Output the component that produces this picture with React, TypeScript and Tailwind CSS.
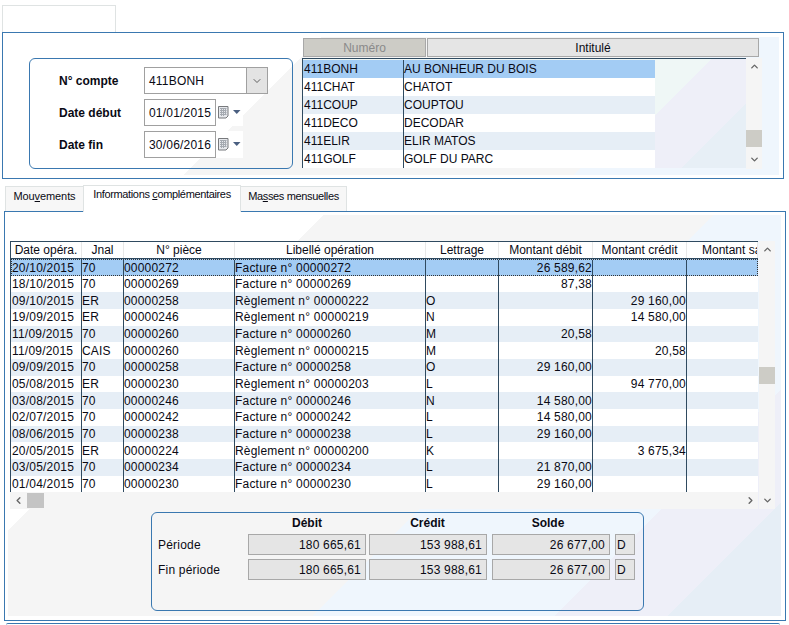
import { ChevronDown, ChevronLeft, ChevronRight, ChevronUp } from 'lucide-react';

const panelBg =
  'bg-[linear-gradient(135deg,#ffffff_223px,#f5f5f5_223px,#f5f5f5_499px,#eff6fd_499px,#eff6fd_670px,#eeeff8_670px,#eeeff8_750px,#e6eef6_750px)]';

const accounts = [
  ['411BONH', 'AU BONHEUR DU BOIS'],
  ['411CHAT', 'CHATOT'],
  ['411COUP', 'COUPTOU'],
  ['411DECO', 'DECODAR'],
  ['411ELIR', 'ELIR MATOS'],
  ['411GOLF', 'GOLF DU PARC'],
];

const columns = [
  { label: 'Date opéra.', width: 'w-[71px]' },
  { label: 'Jnal', width: 'w-[42px]' },
  { label: 'N° pièce', width: 'w-[111px]' },
  { label: 'Libellé opération', width: 'w-[191px]' },
  { label: 'Lettrage', width: 'w-[73px]' },
  { label: 'Montant débit', width: 'w-[94px]' },
  { label: 'Montant crédit', width: 'w-[94px]' },
  { label: 'Montant sa', width: 'w-[71px] !justify-start pl-[15px]' },
];

const rows = [
  ['20/10/2015', '70', '00000272', 'Facture n° 00000272', '', '26 589,62', ''],
  ['18/10/2015', '70', '00000269', 'Facture n° 00000269', '', '87,38', ''],
  ['09/10/2015', 'ER', '00000258', 'Règlement n° 00000222', 'O', '', '29 160,00'],
  ['19/09/2015', 'ER', '00000246', 'Règlement n° 00000219', 'N', '', '14 580,00'],
  ['11/09/2015', '70', '00000260', 'Facture n° 00000260', 'M', '20,58', ''],
  ['11/09/2015', 'CAIS', '00000260', 'Règlement n° 00000215', 'M', '', '20,58'],
  ['09/09/2015', '70', '00000258', 'Facture n° 00000258', 'O', '29 160,00', ''],
  ['05/08/2015', 'ER', '00000230', 'Règlement n° 00000203', 'L', '', '94 770,00'],
  ['03/08/2015', '70', '00000246', 'Facture n° 00000246', 'N', '14 580,00', ''],
  ['02/07/2015', '70', '00000242', 'Facture n° 00000242', 'L', '14 580,00', ''],
  ['08/06/2015', '70', '00000238', 'Facture n° 00000238', 'L', '29 160,00', ''],
  ['20/05/2015', 'ER', '00000224', 'Règlement n° 00000200', 'K', '', '3 675,34'],
  ['03/05/2015', '70', '00000234', 'Facture n° 00000234', 'L', '21 870,00', ''],
  ['01/04/2015', '70', '00000230', 'Facture n° 00000230', 'L', '29 160,00', ''],
];

const totals = [
  ['Période', '180 665,61', '153 988,61', '26 677,00', 'D'],
  ['Fin période', '180 665,61', '153 988,61', '26 677,00', 'D'],
];

function CalendarIcon() {
  return (
    <svg width="24" height="13" viewBox="0 0 24 13" aria-hidden="true">
      <path d="M1.500 .5h9.500v9.500l-2 2h-7.500z" fill="#e6e8ec" stroke="#77797c" />
      <path d="M3 2.500h6.500M3 4.500h6.500M3 6.500h6.500M3 8.500h6.500M4.500 2v8M6.500 2v8M8.500 2v7" stroke="#a4a9b0" />
      <path d="M16 4h7.500l-3.750 4z" fill="#4a5f80" />
    </svg>
  );
}

function DateField({ label, value }: { label: string; value: string }) {
  return (
    <div className="flex h-[27px] items-center">
      <span className="w-[85px] text-[12px] font-bold">{label}</span>
      <div className="flex h-[27px] w-[72px] items-center border border-[#a0a0a0] bg-white pl-[4px] tracking-[0.2px]">
        {value}
      </div>
      <div className="flex h-[27px] w-[27px] items-center bg-white pl-[1px]">
        <CalendarIcon />
      </div>
    </div>
  );
}

function ReadOnlyBox({ value, className }: { value: string; className: string }) {
  return (
    <div className={`flex h-[21px] items-center border border-[#a8a8a8] bg-[#e5e5e5] tracking-[0.2px] ${className}`}>
      {value}
    </div>
  );
}

function AccountPanel() {
  return (
    <div className="ml-[2px] h-[147px] w-[782px] border border-[#3a78b0] bg-white px-[3px] pt-[4px]">
      <div className={`flex h-[138px] w-[773px] pt-[1px] ${panelBg}`}>
        <div className="mt-[20px] ml-[23px] flex h-[111px] w-[264px] flex-col gap-[5px] rounded-[6px] border border-[#3a78b0] pt-[8px] pl-[29px]">
          <div className="flex h-[27px] items-center">
            <span className="w-[85px] text-[12px] font-bold">N° compte</span>
            <div className="flex h-[27px] w-[124px] items-center border border-[#a0a0a0] bg-white pl-[4px]">
              <span className="flex-1 tracking-[0.2px]">411BONH</span>
              <div className="flex h-full w-[21px] items-center justify-center border-l border-[#a0a0a0] bg-[#e3e3e3]">
                <ChevronDown size={12} strokeWidth={1.5} color="#333333" />
              </div>
            </div>
          </div>
          <DateField label="Date début" value="01/01/2015" />
          <DateField label="Date fin" value="30/06/2016" />
        </div>
        <div className="ml-[9px] w-[460px]">
          <div className="ml-[1px] flex h-[19px] gap-[1px]">
            <div className="flex w-[123px] items-center justify-center border border-[#a8a8a8] bg-[#cdccc6] text-[#8a8a8a]">
              Numéro
            </div>
            <div className="flex w-[332px] items-center justify-center border border-[#a8a8a8] bg-[#e5e5e5]">
              Intitulé
            </div>
          </div>
          <div className="mt-[1px] flex h-[111px]">
            <div className="h-[110px] w-[444px] border-t border-l border-[#2f4a60] bg-[linear-gradient(135deg,#eff7f6_289px,#eeeff8_289px,#eeeff8_345px,#e7eff6_345px)] pt-[1px]">
              {accounts.map(([code, name], i) => (
                <div
                  key={code}
                  className={`flex h-[18px] w-[352px] items-center ${
                    i === 0 ? 'bg-[#a3ccf4]' : i % 2 === 0 ? 'bg-[#e6eef6]' : 'bg-white'
                  }`}
                >
                  <span className="w-[100px] pl-[1px]">{code}</span>
                  <span className="flex h-full flex-1 items-center border-l border-[#2f4a60]">{name}</span>
                </div>
              ))}
            </div>
            <div className="flex h-[111px] w-[16px] flex-col items-center bg-[#f5f5f5] pt-[3px] pb-[4px]">
              <ChevronUp size={11} strokeWidth={3} color="#666666" />
              <div className="mt-[58px] h-[17px] w-full bg-[#cdccc6]" />
              <div className="flex-1" />
              <ChevronDown size={11} strokeWidth={3} color="#666666" />
            </div>
          </div>
        </div>
      </div>
    </div>
  );
}

function Tabs() {
  return (
    <div className="mt-[6px] flex h-[26px] items-end pl-[5px] text-[11px]">
      <div className="flex h-[25px] w-[78px] items-center justify-center border-t border-l border-[#dfe3e3] bg-[#f7f7f7] pb-[6px] tracking-[-0.1px]">
        <span className="whitespace-nowrap">
          Mou<u>v</u>ements
        </span>
      </div>
      <div className="z-10 -mb-[1px] flex h-[27px] w-[158px] items-start justify-center border-x border-t border-[#dfe3e3] bg-white pt-[3px] tracking-[-0.35px]">
        <span className="whitespace-nowrap">
          Informations <u>c</u>omplémentaires
        </span>
      </div>
      <div className="flex h-[25px] w-[106px] items-center justify-center border-t border-r border-[#dfe3e3] bg-[#f7f7f7] pb-[6px] tracking-[-0.35px]">
        <span className="whitespace-nowrap">
          Ma<u>s</u>ses mensuelles
        </span>
      </div>
    </div>
  );
}

function OperationsGrid() {
  return (
    <div className="flex h-[268px]">
      <div className="w-[748px]">
        <div className="h-[251px] w-[748px] overflow-hidden border-t border-l border-[#2f4a60] bg-white">
          <div className="flex h-[17px] border-b border-[#2f4a60]">
            {columns.map((col) => (
              <div
                key={col.label}
                className={`flex shrink-0 items-center justify-center overflow-hidden border-r border-[#e8e8e8] pb-[1px] whitespace-nowrap ${col.width}`}
              >
                {col.label}
              </div>
            ))}
          </div>
          {rows.map((row, i) => (
            <div
              key={row[0] + row[3]}
              className={`flex h-[16.66px] w-[747px] tracking-[0.2px] ${
                i === 0
                  ? 'bg-[#a3ccf4] pt-[1px] outline-1 -outline-offset-1 outline-[#333333] outline-dotted'
                  : i % 2 === 0
                    ? 'bg-[#e6eef6]'
                    : 'bg-white'
              }`}
            >
              {columns.map((col, c) => (
                <div
                  key={col.label}
                  className={`flex h-full shrink-0 items-center overflow-hidden whitespace-nowrap ${
                    c === 7 ? 'w-[71px]' : `border-r border-[#2f4a60] ${col.width}`
                  } ${c === 5 || c === 6 ? 'justify-end' : c === 0 ? 'pl-[1px]' : ''}`}
                >
                  {row[c] ?? ''}
                </div>
              ))}
            </div>
          ))}
        </div>
        <div className="flex h-[17px] items-center bg-[#f5f5f5] pr-[2px]">
          <div className="flex w-[17px] justify-center">
            <ChevronLeft size={11} strokeWidth={3} color="#666666" />
          </div>
          <div className="h-[15px] w-[17px] bg-[#c4c4c4]" />
          <div className="flex flex-1 justify-end">
            <ChevronRight size={11} strokeWidth={3} color="#666666" />
          </div>
        </div>
      </div>
      <div className="ml-[1px] flex w-[16px] flex-col items-center bg-[#f5f5f5] py-[3px]">
        <ChevronUp size={11} strokeWidth={3} color="#666666" />
        <div className="mt-[112px] h-[17px] w-full bg-[#cdccc6]" />
        <div className="flex-1" />
        <ChevronDown size={11} strokeWidth={3} color="#666666" />
      </div>
    </div>
  );
}

function TotalsBox() {
  return (
    <div className="mt-[3px] ml-[141px] h-[99px] w-[493px] rounded-[6px] border border-[#3a78b0] pl-[6px]">
      <div className="flex h-[21px] items-center pb-[2px] pl-[90px] font-bold">
        <span className="w-[118px] text-center">Débit</span>
        <span className="w-[123px] text-center">Crédit</span>
        <span className="w-[118px] text-center">Solde</span>
      </div>
      <div className="flex flex-col gap-[4px]">
        {totals.map(([label, debit, credit, balance, side]) => (
          <div key={label} className="flex items-center">
            <span className="w-[90px] tracking-[0.2px]">{label}</span>
            <ReadOnlyBox value={debit} className="w-[118px] justify-end pr-[4px]" />
            <ReadOnlyBox value={credit} className="ml-[3px] w-[118px] justify-end pr-[4px]" />
            <ReadOnlyBox value={balance} className="ml-[5px] w-[118px] justify-end pr-[4px]" />
            <ReadOnlyBox value={side} className="ml-[5px] w-[20px] pl-[1px]" />
          </div>
        ))}
      </div>
    </div>
  );
}

export default function App() {
  return (
    <div className="h-[625px] w-[789px] overflow-hidden bg-white font-['Liberation_Sans',Arial,sans-serif] text-[12px] leading-none text-[#0a0a14]">
      <div className="h-[32px] pt-[5px] pl-[2px]">
        <div className="-mb-[1px] h-[28px] w-[114px] border-x border-t border-[#dfe3e3] bg-white" />
      </div>
      <div className="relative z-0">
        <AccountPanel />
      </div>
      <Tabs />
      <div className="ml-[4px] h-[410px] w-[782px] border border-[#3a78b0] bg-white px-[3px] pt-[3px]">
        <div className={`h-[401px] w-[773px] pt-[26px] pl-[2px] ${panelBg}`}>
          <OperationsGrid />
          <TotalsBox />
        </div>
      </div>
      <div className="mt-[2px] ml-[6px] h-[2px] w-[774px] rounded-t-[2px] border-t border-[#3a78b0]" />
    </div>
  );
}
